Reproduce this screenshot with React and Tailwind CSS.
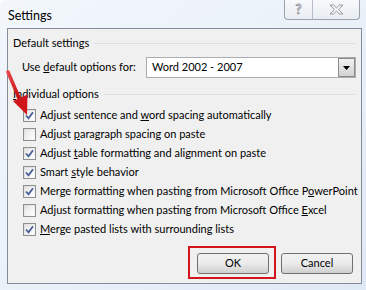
import React from 'react';

const options = [
  { checked: true, text: ['Adjust sentence and ', 'w', 'ord spacing automatically'] },
  { checked: false, text: ['Adjust ', 'p', 'aragraph spacing on paste'] },
  { checked: true, text: ['Adjust ', 't', 'able formatting and alignment on paste'] },
  { checked: true, text: ['Smart ', 's', 'tyle behavior'] },
  { checked: true, text: ['Merge formatting when pasting from Microsoft Office P', 'o', 'werPoint'] },
  { checked: false, text: ['Adjust formatting when pasting from Microsoft Office ', 'E', 'xcel'] },
  { checked: true, text: ['', 'M', 'erge pasted lists with surrounding lists'] },
];

function Checkbox({ checked }) {
  return (
    <div className="shrink-0 w-[13px] h-[13px] border border-[#8e8f8f] bg-gradient-to-br from-[#dcdcdc] to-[#fbfbfb] p-px flex items-center justify-center">
      <div className="w-full h-full bg-gradient-to-br from-[#e6e6e6] to-white flex items-center justify-center">
        {checked && (
          <svg width="9" height="9" viewBox="0 0 9 9">
            <path d="M1 4.5 L3.5 7.3 L8 1.2" fill="none" stroke="#4a5f97" strokeWidth="1.8" />
          </svg>
        )}
      </div>
    </div>
  );
}

function GroupHeader({ label }) {
  return (
    <div className="flex items-center h-4 pl-[5px] pr-[6px]">
      <span className="whitespace-nowrap">{label}</span>
      <div className="flex-1 ml-[5px] h-px bg-[#d5dfe5]" />
    </div>
  );
}

function Button({ children }) {
  return (
    <div className="w-[72px] h-[21px] rounded-[3px] border border-[#707070] bg-gradient-to-b from-[#f2f2f2] via-[#ebebeb] to-[#cfcfcf] flex items-center justify-center">
      {children}
    </div>
  );
}

export default function App() {
  return (
    <div
      className="relative w-[366px] h-[290px] overflow-hidden bg-gradient-to-br from-[#f3f7fc] via-[#eaf1f9] to-[#dfe9f5] rounded-tl-[6px] text-[11px] text-black"
      style={{ fontFamily: 'Lato, "Noto Sans", sans-serif' }}
    >
      {/* title bar */}
      <div className="h-[28px] flex items-start justify-between">
        <div className="pl-[8px] pt-[7px] text-[12.5px]">Settings</div>
        <div className="mr-[6px] flex h-[20px] border border-t-0 border-[#9aa4af] rounded-b-[4px] bg-gradient-to-b from-[#f7f9fb] to-[#e9edf1]">
          <div className="w-[28px] flex items-center justify-center border-r border-[#b5bec8] text-[13px] font-bold text-[#f6f6f6] [-webkit-text-stroke:0.8px_#8a8f96]">
            ?
          </div>
          <div className="w-[46px] flex items-center justify-center">
            <svg width="15" height="11" viewBox="0 0 15 11">
              <path
                d="M1 1 H4.5 L7.5 3.8 L10.5 1 H14 L9.6 5.5 L14 10 H10.5 L7.5 7.2 L4.5 10 H1 L5.4 5.5 Z"
                fill="#f4f4f4"
                stroke="#8a8f96"
                strokeWidth="0.9"
              />
            </svg>
          </div>
        </div>
      </div>

      {/* client area */}
      <div className="ml-[7px] w-[355px] h-[256px] border border-[#838d99] bg-[#f0f0f0]">
        <div className="mt-[6px]">
          <GroupHeader label="Default settings" />
        </div>
        <div className="mt-[6px] flex items-center h-[21px] pl-[14px]">
          <span className="w-[124px] whitespace-nowrap">
            Use <u>d</u>efault options for:
          </span>
          <div className="w-[210px] h-[21px] border border-[#abadb3] bg-white flex items-center">
            <span className="flex-1 pl-[5px] whitespace-nowrap">Word 2002 - 2007</span>
            <div className="w-[17px] h-[19px] border border-[#8a8a8a] bg-gradient-to-b from-[#f2f2f2] to-[#d2d2d2] flex items-center justify-center">
              <svg width="7" height="4" viewBox="0 0 7 4">
                <path d="M0 0 H7 L3.5 4 Z" fill="#000" />
              </svg>
            </div>
          </div>
        </div>
        <div className="mt-[8px]">
          <GroupHeader label={<><u>I</u>ndividual options</>} />
        </div>
        <div className="mt-[4px] pl-[15px]">
          {options.map((o, i) => (
            <div key={i} className="h-[19px] flex items-center gap-[4px]">
              <Checkbox checked={o.checked} />
              <span className="whitespace-nowrap">
                {o.text[0]}
                <u>{o.text[1]}</u>
                {o.text[2]}
              </span>
            </div>
          ))}
        </div>
        <div className="mt-[14px] flex justify-end gap-[12px] pr-[8px]">
          <div className="relative">
            <Button>OK</Button>
            <div className="absolute left-[-9px] top-[-7px] right-[-7px] bottom-[-5px] border-2 border-[#d3141c]" />
          </div>
          <Button>Cancel</Button>
        </div>
      </div>

      {/* red arrow */}
      <svg className="absolute left-0 top-0 pointer-events-none" width="40" height="120" viewBox="0 0 40 120">
        <defs>
          <linearGradient id="ar" x1="0" y1="0" x2="1" y2="1">
            <stop offset="0" stopColor="#e8484b" />
            <stop offset="1" stopColor="#c40f14" />
          </linearGradient>
        </defs>
        <line x1="8" y1="72" x2="19" y2="98" stroke="url(#ar)" strokeWidth="3.6" strokeLinecap="round" />
        <polygon points="27,115 13,101 27.5,94.5" fill="#d0161b" />
      </svg>
    </div>
  );
}
